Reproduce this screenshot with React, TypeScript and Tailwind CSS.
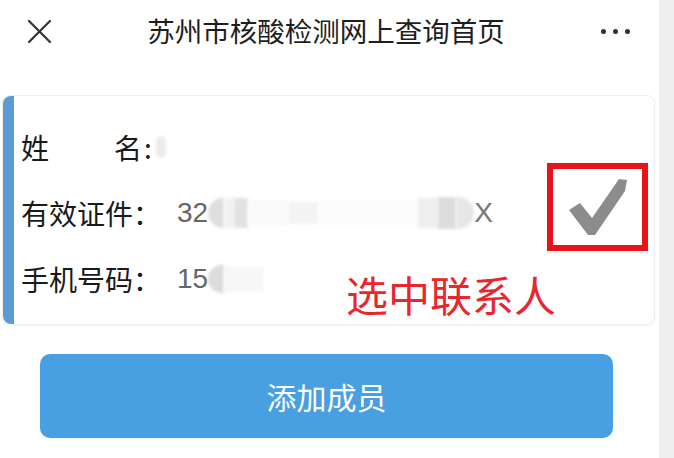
const cjk = { fontFamily: '"Noto Sans CJK SC", "Noto Sans", sans-serif' };
const num = { fontFamily: '"Liberation Sans", "Noto Sans CJK SC", sans-serif' };

function Blob({ className }: { className: string }) {
  return <span className={"inline-block blur-[1.5px] " + className} />;
}

function App() {
  return (
    <div className="flex h-[458px] w-[674px] overflow-hidden bg-white" style={cjk}>
      <div className="flex w-[659px] flex-col">
        {/* header */}
        <div className="flex h-[62px] items-center justify-between pl-[28px] pr-[29px]">
          <svg width="23" height="23" viewBox="0 0 23 23" className="text-[#333]">
            <path d="M1 1 L22 22 M22 1 L1 22" stroke="currentColor" strokeWidth="2.2" strokeLinecap="round" />
          </svg>
          <div className="text-[27.5px] leading-none text-[#1e1e1e]">
            苏州市核酸检测网上查询首页
          </div>
          <div className="flex items-center gap-[7px]">
            <span className="h-[5px] w-[5px] rounded-full bg-[#333]" />
            <span className="h-[5px] w-[5px] rounded-full bg-[#333]" />
            <span className="h-[5px] w-[5px] rounded-full bg-[#333]" />
          </div>
        </div>

        {/* card */}
        <div className="relative mt-[33px] ml-[2px] flex h-[230px] w-[653px] rounded-[8px] border border-[#eeeeee] shadow-[0_1px_3px_rgba(0,0,0,0.05)]">
          <div className="w-[11px] rounded-l-[8px] bg-[#5d9bd6]" />
          <div className="flex flex-col pt-[18px] pl-[7px]">
            <div className="flex h-[66px] items-center text-[28px] text-[#1a1a1a]">
              <span className="flex w-[121px] justify-between">
                <span>姓</span>
                <span>名</span>
              </span>
              <span className="ml-[2px]">:</span>
              <Blob className="ml-[4px] h-[22px] w-[10px] rounded-full bg-[#ececec]" />
            </div>
            <div className="flex h-[66px] items-center text-[28px] text-[#1a1a1a]">
              <span>有效证件：</span>
              <span className="ml-[16px] text-[#666]" style={num}>
                32
              </span>
              <span className="flex h-[34px] items-center">
                <Blob className="h-[30px] w-[16px] rounded-l-full bg-[#dedede]" />
                <Blob className="h-[30px] w-[10px] bg-[#f1f1f1]" />
                <Blob className="h-[30px] w-[14px] bg-[#e2e2e2]" />
                <Blob className="h-[26px] w-[40px] bg-[#fafafa]" />
                <Blob className="h-[22px] w-[30px] bg-[#f4f4f4]" />
                <Blob className="h-[26px] w-[100px] bg-[#fbfbfb]" />
                <Blob className="h-[30px] w-[20px] bg-[#eeeeee]" />
                <Blob className="h-[32px] w-[18px] bg-[#dcdcdc]" />
                <Blob className="h-[32px] w-[18px] rounded-r-full bg-[#e6e6e6]" />
              </span>
              <span className="text-[#777]" style={num}>
                X
              </span>
            </div>
            <div className="flex h-[66px] items-center text-[28px] text-[#1a1a1a]">
              <span>手机号码：</span>
              <span className="ml-[16px] text-[#666]" style={num}>
                15
              </span>
              <Blob className="h-[28px] w-[16px] rounded-l-full bg-[#dcdcdc]" />
              <Blob className="h-[26px] w-[40px] bg-[#f7f7f7]" />
            </div>
          </div>

          {/* annotation */}
          <div className="absolute left-[544px] top-[67px] flex h-[88px] w-[101px] items-center justify-center border-[6px] border-[#e8131b] bg-white">
            <svg width="62" height="60" viewBox="0 0 62 60">
              <polygon
                points="2,33 13,26 25,41 52,2 60,3 58,14 28,58 21,58"
                fill="#8c8c8c"
              />
            </svg>
          </div>
          <div className="absolute left-[343px] top-[177px] text-[42px] leading-none text-[#e8262b]">
            选中联系人
          </div>
        </div>

        {/* button */}
        <div className="mt-[29px] ml-[40px] flex h-[84px] w-[573px] items-center justify-center rounded-[10px] bg-[#489fe1] text-[30px] text-white">
          添加成员
        </div>
      </div>
      <div className="w-[15px] bg-[#efefef]" />
    </div>
  );
}

export default App;
